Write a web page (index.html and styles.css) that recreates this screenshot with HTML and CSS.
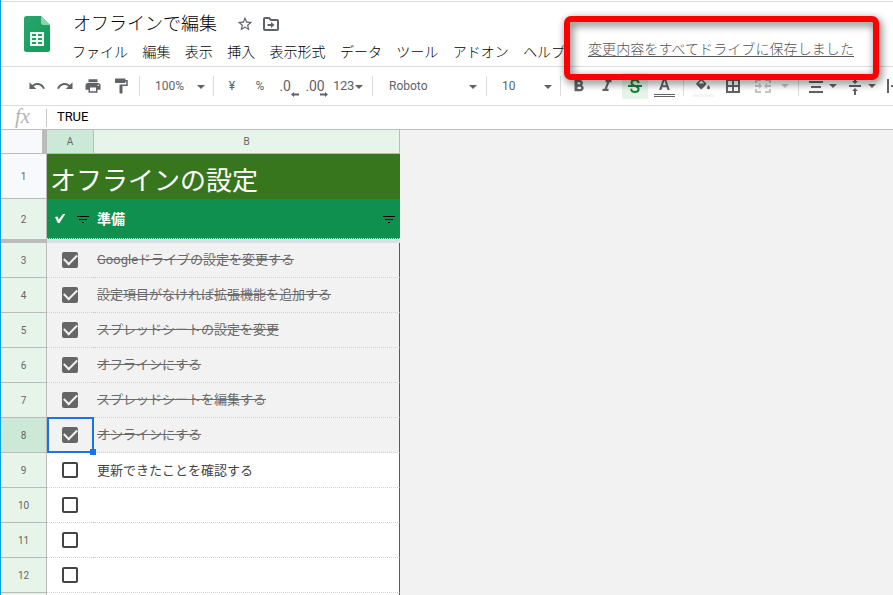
FILE: index.html
```html
<!DOCTYPE html>
<html lang="ja">
<head>
<meta charset="utf-8">
<title>オフラインで編集</title>
<link rel="stylesheet" href="styles.css">
</head>
<body>
<div class="app">
  <header class="header">
    <svg class="logo" width="26" height="36" viewBox="0 0 26 36"><defs><linearGradient id="lg" x2="1" y2="1"><stop stop-color="#2ba56e"/><stop offset="1" stop-color="#109d58"/></linearGradient></defs><path d="M2.500 0H17l9 9v24.500a2.500 2.500 0 0 1-2.500 2.500h-21A2.500 2.500 0 0 1 0 33.500v-31A2.500 2.500 0 0 1 2.500 0z" fill="url(#lg)"/><path d="M17 0l9 9h-6.500A2.500 2.500 0 0 1 17 6.500z" fill="#8ed1b1"/><path d="M6 16h14v14H6z" fill="#f1f8f4"/><path d="M8 18h4v2H8zm6 0h4v2h-4zM8 22h4v2H8zm6 0h4v2h-4zM8 26h4v2H8zm6 0h4v2h-4z" fill="#1da362"/></svg>
    <div class="heading">
      <div class="title-row">
        <h1 class="title">オフラインで編集</h1>
        <svg class="star" width="16" height="16" viewBox="1 1 22 22"><path d="M22 9.240l-7.190-.620L12 2 9.190 8.630 2 9.240l5.460 4.730L5.820 21 12 17.270 18.180 21l-1.630-7.030L22 9.240zM12 15.400l-3.760 2.270 1-4.280-3.320-2.880 4.380-.380L12 6.100l1.710 4.040 4.380.380-3.320 2.880 1 4.280L12 15.400z"/></svg>
        <svg class="folder" width="16" height="14" viewBox="0 0 16 14"><path d="M2 1h4l2 2h6a1 1 0 0 1 1 1v8a1 1 0 0 1-1 1H2a1 1 0 0 1-1-1V2a1 1 0 0 1 1-1z" fill="none" stroke="#5f6368" stroke-width="2"/><path d="M4.500 7H8V5l3.500 3L8 11V9H4.500z"/></svg>
      </div>
      <nav class="menu"><span>ファイル</span><span>編集</span><span>表示</span><span>挿入</span><span>表示形式</span><span>データ</span><span>ツール</span><span>アドオン</span><span>ヘルプ</span></nav>
    </div>
    <a class="saved">変更内容をすべてドライブに保存しました</a>
  </header>

  <div class="toolbar">
    <div class="tool w28"><svg width="18" height="18" viewBox="0 0 24 24"><path d="M12.500 8c-2.650 0-5.050.990-6.900 2.600L2 7v9h9l-3.620-3.620c1.390-1.160 3.160-1.880 5.120-1.880 3.540 0 6.550 2.310 7.600 5.500l2.370-.780C21.080 11.030 17.150 8 12.500 8z"/></svg></div>
    <div class="tool w28"><svg width="18" height="18" viewBox="0 0 24 24"><path d="M18.400 10.600C16.550 8.990 14.150 8 11.500 8c-4.650 0-8.580 3.030-9.960 7.220L3.900 16c1.050-3.190 4.050-5.500 7.600-5.500 1.950 0 3.730.720 5.120 1.880L13 16h9V7l-3.600 3.600z"/></svg></div>
    <div class="tool w28"><svg width="18" height="18" viewBox="0 0 24 24"><path d="M19 8H5c-1.660 0-3 1.340-3 3v6h4v4h12v-4h4v-6c0-1.660-1.340-3-3-3zm-3 11H8v-5h8v5zm3-7a1 1 0 1 1 0-2 1 1 0 0 1 0 2zM18 3H6v4h12z"/></svg></div>
    <div class="tool w28"><svg width="18" height="18" viewBox="0 0 24 24"><path d="M18 4V3a1 1 0 0 0-1-1H5a1 1 0 0 0-1 1v4a1 1 0 0 0 1 1h12a1 1 0 0 0 1-1V6h1v4H10v11a1 1 0 0 0 1 1h2a1 1 0 0 0 1-1v-9h7V4h-3z"/></svg></div>
    <i class="sep"></i>
    <div class="tool select zoom"><span>100%</span><b class="arrow"></b></div>
    <i class="sep"></i>
    <div class="tool w28 yen">¥</div>
    <div class="tool w28">%</div>
    <div class="tool dec">.0<svg class="decarrow" width="8" height="5" viewBox="0 0 8 5"><path d="M3 0v1.500h5v2H3V5L0 2.500z"/></svg></div>
    <div class="tool dec dec2">.00<svg class="decarrow" width="8" height="5" viewBox="0 0 8 5"><path d="M5 0v1.500H0v2h5V5l3-2.500z"/></svg></div>
    <div class="tool select num"><span>123</span><b class="arrow"></b></div>
    <i class="sep"></i>
    <div class="tool select font"><span>Roboto</span><b class="arrow"></b></div>
    <i class="sep"></i>
    <div class="tool select size"><span>10</span><b class="arrow"></b></div>
    <i class="sep"></i>
    <div class="tool w28 bold"><svg width="18" height="18" viewBox="0 0 24 24"><path d="M15.600 10.790c.970-.670 1.650-1.770 1.650-2.790 0-2.260-1.750-4-4-4H6v15h8.040c2.090 0 4.210-1.700 4.210-4.290 0-1.520-1.360-3.320-2.650-3.920zM10 7h2.700c.830 0 1.300.470 1.300 1.300s-.470 1.300-1.300 1.300H10V7zm3.500 9H10v-3h3.500c.830 0 1.500.670 1.500 1.500s-.670 1.500-1.500 1.500z"/></svg></div>
    <div class="tool w28"><svg width="18" height="18" viewBox="0 0 24 24"><path d="M10 4v3h2.200l-3.400 8.500H6v3h8v-3h-2.200L15.200 7H18V4z"/></svg></div>
    <div class="tool strike"><svg width="18" height="18" viewBox="0 0 18 18"><path d="M2 8h14v2H2z"/><path d="M12.500 6C12.500 3.800 11 3 9 3S5.500 4 5.500 5.700C5.500 7 6.300 8 8 8.500M10 9.500c1.800.500 2.600 1.300 2.600 2.600C12.600 14 11 15 9 15s-3.800-1-3.800-3.200" fill="none" stroke="#188038" stroke-width="2"/></svg></div>
    <div class="tool color"><svg width="21" height="26" viewBox="0 0 21 26"><path d="M9.300 5h2.400l4.100 12h-2.200l-1-2.800H8.300L7.300 17H5.100zM8.900 12.300h3.200L10.500 7.500z"/><path d="M0 21h21v1H0zm0 2h21v1H0z"/></svg></div>
    <i class="sep"></i>
    <div class="tool fill"><svg width="21" height="26" viewBox="0 0 21 26"><path d="M7 4l6.200 6.200a1 1 0 0 1 0 1.400l-4.200 4.400a1 1 0 0 1-1.400 0l-4.200-4.400a1 1 0 0 1 0-1.400L7.200 6.500 6 5.300zM8.300 7.600L5.500 10.500h5.700z"/><path d="M15.500 12s-1.500 1.700-1.500 2.800a1.500 1.500 0 0 0 3 0c0-1.100-1.500-2.800-1.500-2.800z"/><path d="M0 21h21v3H0z" fill="#f4f4f4"/></svg></div>
    <div class="tool borders"><svg width="14" height="14" viewBox="0 0 14 14"><path d="M0 0v14h14V0zm6 12H2V8h4zm0-6H2V2h4zm6 6H8V8h4zm0-6H8V2h4z"/></svg></div>
    <div class="tool merge"><svg width="16" height="14" viewBox="0 0 16 14"><path d="M0 0h6v2H2v2H0zM10 0h6v4h-2V2h-4zM0 10h2v2h4v2H0zM14 10h2v4h-6v-2h4zM0 6h4V4l3 3-3 3V8H0zM16 6h-4V4L9 7l3 3V8h4z"/></svg><b class="arrow"></b></div>
    <i class="sep"></i>
    <div class="tool align"><svg width="14" height="12" viewBox="0 0 14 12"><path d="M0 0h14v2H0zm2 5h10v2H2zm-2 5h14v2H0z"/></svg><b class="arrow"></b></div>
    <div class="tool valign"><svg width="12" height="18" viewBox="0 0 12 18"><path d="M0 8h12v2H0zM5 0h2v4h2L6 7 3 4h2zM5 18h2v-4h2l-3-3-3 3h2z"/></svg><b class="arrow"></b></div>
    <div class="tool wrap"><svg width="16" height="16" viewBox="0 0 16 16"><path d="M0 1h2v14H0zM4 7h12v2H4z"/></svg></div>
  </div>

  <div class="formula"><span class="fx">fx</span><span class="value">TRUE</span></div>

  <main class="sheet">
    <div class="colhead"><div class="corner"></div><div class="col-a">A</div><div class="col-b">B</div></div>
    <div class="row r1"><div class="rh">1</div><div class="banner">オフラインの設定</div></div>
    <div class="row r2"><div class="rh">2</div><div class="group"><svg class="check" width="12" height="12" viewBox="0 0 12 12"><path d="M1 4L3.500 3.500 4.800 6.500 9 1h2.300L5.500 10H3.800z" fill="#fff"/></svg><svg class="filter" width="12" height="7" viewBox="0 0 12 7"><path d="M0 0h12v1H0zm2 3h8v1H2zm3 3h2v1H5z"/></svg><strong>準備</strong><svg class="filter last" width="12" height="7" viewBox="0 0 12 7"><path d="M0 0h12v1H0zm2 3h8v1H2zm3 3h2v1H5z"/></svg></div></div>
    <div class="freeze"></div>
    <div class="row done"><div class="rh">3</div><div class="a"><i class="box"></i></div><div class="b"><s>Googleドライブの設定を変更する</s></div></div>
    <div class="row done"><div class="rh">4</div><div class="a"><i class="box"></i></div><div class="b"><s>設定項目がなければ拡張機能を追加する</s></div></div>
    <div class="row done"><div class="rh">5</div><div class="a"><i class="box"></i></div><div class="b"><s>スプレッドシートの設定を変更</s></div></div>
    <div class="row done"><div class="rh">6</div><div class="a"><i class="box"></i></div><div class="b"><s>オフラインにする</s></div></div>
    <div class="row done"><div class="rh">7</div><div class="a"><i class="box"></i></div><div class="b"><s>スプレッドシートを編集する</s></div></div>
    <div class="row done active"><div class="rh">8</div><div class="a"><i class="box"></i></div><div class="b"><s>オンラインにする</s></div></div>
    <div class="row"><div class="rh">9</div><div class="a"><i class="box"></i></div><div class="b">更新できたことを確認する</div></div>
    <div class="row"><div class="rh">10</div><div class="a"><i class="box"></i></div><div class="b"></div></div>
    <div class="row"><div class="rh">11</div><div class="a"><i class="box"></i></div><div class="b"></div></div>
    <div class="row"><div class="rh">12</div><div class="a"><i class="box"></i></div><div class="b"></div></div>
    <div class="row"><div class="rh"></div><div class="a"></div><div class="b"></div></div>
  </main>
  <div class="callout"></div>
</div>
</body>
</html>
```
FILE: styles.css
```css
* { box-sizing: border-box; }
body { margin: 0; overflow: hidden; background: #fff; font-family: Roboto, "Noto Sans CJK JP", sans-serif; color: #000; }
svg { display: block; flex: none; fill: #5f6368; }
.app { position: relative; width: 893px; height: 595px; overflow: hidden; border-left: 1px solid #0aa1e8; display: flex; flex-direction: column; }

.header { height: 67px; flex: none; display: flex; border-bottom: 1px solid #dadce0; background: linear-gradient(#dadce0, #dadce0) 0 1px / 100% 1px no-repeat; font-family: "Noto Sans CJK JP", sans-serif; white-space: nowrap; }
.logo { margin: 16px 0 0 23px; }
.heading { margin-left: 23px; width: 514px; flex: none; padding-top: 9px; }
.title-row { display: flex; align-items: center; height: 26px; }
.title { margin: 0; width: 144px; font-size: 18px; font-weight: 300; line-height: 26px; }
.star { margin: 4px 0 0 20px; }
.folder { margin: 4px 0 0 10px; }
.menu { display: flex; gap: 14.400px; margin: 5px 0 0 -1px; font-size: 14px; font-weight: 300; line-height: 22px; }
.saved { align-self: flex-start; margin: 38px 0 0 1px; font-size: 14px; font-weight: 300; letter-spacing: .08px; line-height: 20px; color: #555; text-decoration: underline; text-decoration-thickness: 1px; text-underline-offset: 2px; }

.toolbar { height: 39px; flex: none; display: flex; align-items: center; padding-left: 22px; border-bottom: 1px solid #dadce0; font-size: 12px; color: #5f6368; overflow: hidden; }
.tool { flex: none; display: flex; align-items: center; justify-content: center; height: 26px; }
.w28 { width: 28px; }
.sep { flex: none; width: 1px; height: 20px; background: #dadce0; }
.tool + .sep { margin-left: 4px; }
.arrow { flex: none; width: 0; height: 0; border: 4px solid transparent; border-top-color: #5f6368; border-bottom: 0; }
.select { justify-content: flex-start; }
.select span { margin-top: -1px; }
.select .arrow { margin-left: auto; margin-top: 2px; }
.zoom { width: 69px; padding: 0 4px 0 15px; }
.yen { margin-left: 4px; }
.dec { position: relative; width: 28px; font-size: 14px; letter-spacing: -.2px; padding-right: 6px; }
.dec2 { width: 31px; padding: 0 5px 0 0; }
.decarrow { position: absolute; right: 3px; bottom: 2px; }
.dec2 .decarrow { right: 5px; }
.num { width: 31px; font-size: 13px; letter-spacing: -.3px; }
.num .arrow { margin-left: 1px; }
.num + .sep { margin-left: 8px; }
.font { width: 109px; padding: 0 5px 0 16px; }
.size { width: 69px; padding: 0 4px 0 15px; }
.bold { margin-left: 4px; }
.size + .sep { margin-left: 4px; }
.strike { width: 26px; margin-left: 1px; background: #e6f4ea; border-radius: 2px; }
.strike svg { fill: #188038; }
.color { width: 31px; margin-left: 1px; }
.color + .sep { margin-left: 3px; }
.fill { width: 31px; margin-left: 4px; }
.borders { width: 28px; }
.merge { width: 42px; margin-left: 4px; justify-content: space-between; padding: 0 4px; }
.merge svg { fill: #c4c6c8; }
.merge .arrow { border-top-color: #c4c6c8; }
.merge + .sep { margin-left: 5px; }
.align { width: 38px; justify-content: space-between; padding-left: 10px; }
.align svg { margin-top: 2px; }
.valign { width: 39px; justify-content: space-between; padding-left: 12px; }
.wrap { margin-left: 11px; }

.formula { height: 24px; flex: none; display: flex; align-items: center; border-bottom: 1px solid #bdbdbd; }
.fx { width: 46px; height: 18px; padding-left: 14px; border-right: 1px solid #c8c8c8; color: #b4b4b4; font: italic 21px/14px "Liberation Serif", serif; }
.value { margin: -2px 0 0 10px; font-size: 13px; letter-spacing: -.1px; line-height: 20px; }

.sheet { flex: 1; min-height: 0; overflow: hidden; background: #f2f2f2; }
.colhead { display: flex; width: 399px; height: 24px; font-size: 10px; line-height: 23px; text-align: center; color: #666; }
.colhead > div { border-bottom: 1px solid #bbb; border-right: 1px solid #bbb; }
.corner { width: 46px; background: #f8f9fd; border-right-width: 5px !important; }
.col-a { width: 47px; background: #cce8d6; }
.col-b { width: 306px; background: #e6f4ea; }
.row { display: flex; width: 399px; height: 35px; background: #fff; }
.rh { flex: none; width: 46px; display: flex; align-items: center; justify-content: center; font-size: 10px; color: #666; background: #e6f4ea; border-right: 1px solid #bbb; border-bottom: 1px solid #bbb; }
.r1 { height: 45px; }
.r1 .rh { background: #f8f9fd; }
.banner { width: 353px; padding-left: 3px; background: #38761d; color: #fff; font: 400 26px/50px "Noto Sans CJK JP", sans-serif; }
.r2 { height: 40px; }
.r2 .rh { border-bottom: 0; }
.group { width: 353px; display: flex; align-items: center; background: #0f904f; border-bottom: 1px dotted #dfe8e2; color: #fff; font: 14px/20px "Noto Sans CJK JP", sans-serif; padding: 0 5px 0 7px; }
.filter { fill: #000; margin: 1px 0 0 11px; }
.group strong { margin: -2px 0 0 8px; }
.last { margin-left: auto; }
.freeze { width: 399px; height: 4px; background: linear-gradient(90deg, #bbb 46px, #dadfe8 46px); }
.a { position: relative; width: 47px; display: flex; align-items: center; padding-left: 15px; border-bottom: 1px dotted #d0d0d0; }
.b { width: 306px; padding-left: 3px; border-bottom: 1px dotted #d0d0d0; border-right: 1px solid #188038; font: 400 13px/34px "Noto Sans CJK JP", sans-serif; color: #444; white-space: nowrap; }
.box { width: 16px; height: 16px; border: 2px solid #444; border-radius: 2px; }
.done { background: #f2f2f2; }
.done .b { color: #6a6a6a; font-family: Roboto, "Noto Sans CJK JP", sans-serif; }
.done .box { background: #666; border-color: #666; display: flex; align-items: center; justify-content: center; }
.done .box::after { content: ""; width: 11px; height: 6px; border: solid #f2f2f2; border-width: 0 0 2px 2px; transform: translateY(-2px) rotate(-45deg); flex: none; }
.active .rh { background: #cce8d6; }
.active .a::before { content: ""; position: absolute; inset: -1px 0 -1px 0; border: 2px solid #1a73e8; }
.active .a::after { content: ""; position: absolute; right: -2px; bottom: -3px; width: 6px; height: 6px; background: #1a73e8; }

.callout { position: absolute; left: 563px; top: 16px; width: 315px; height: 64px; border: 6px solid #f00; border-radius: 7px; filter: drop-shadow(2px 3px 4px rgba(0, 0, 0, .6)); }
```
